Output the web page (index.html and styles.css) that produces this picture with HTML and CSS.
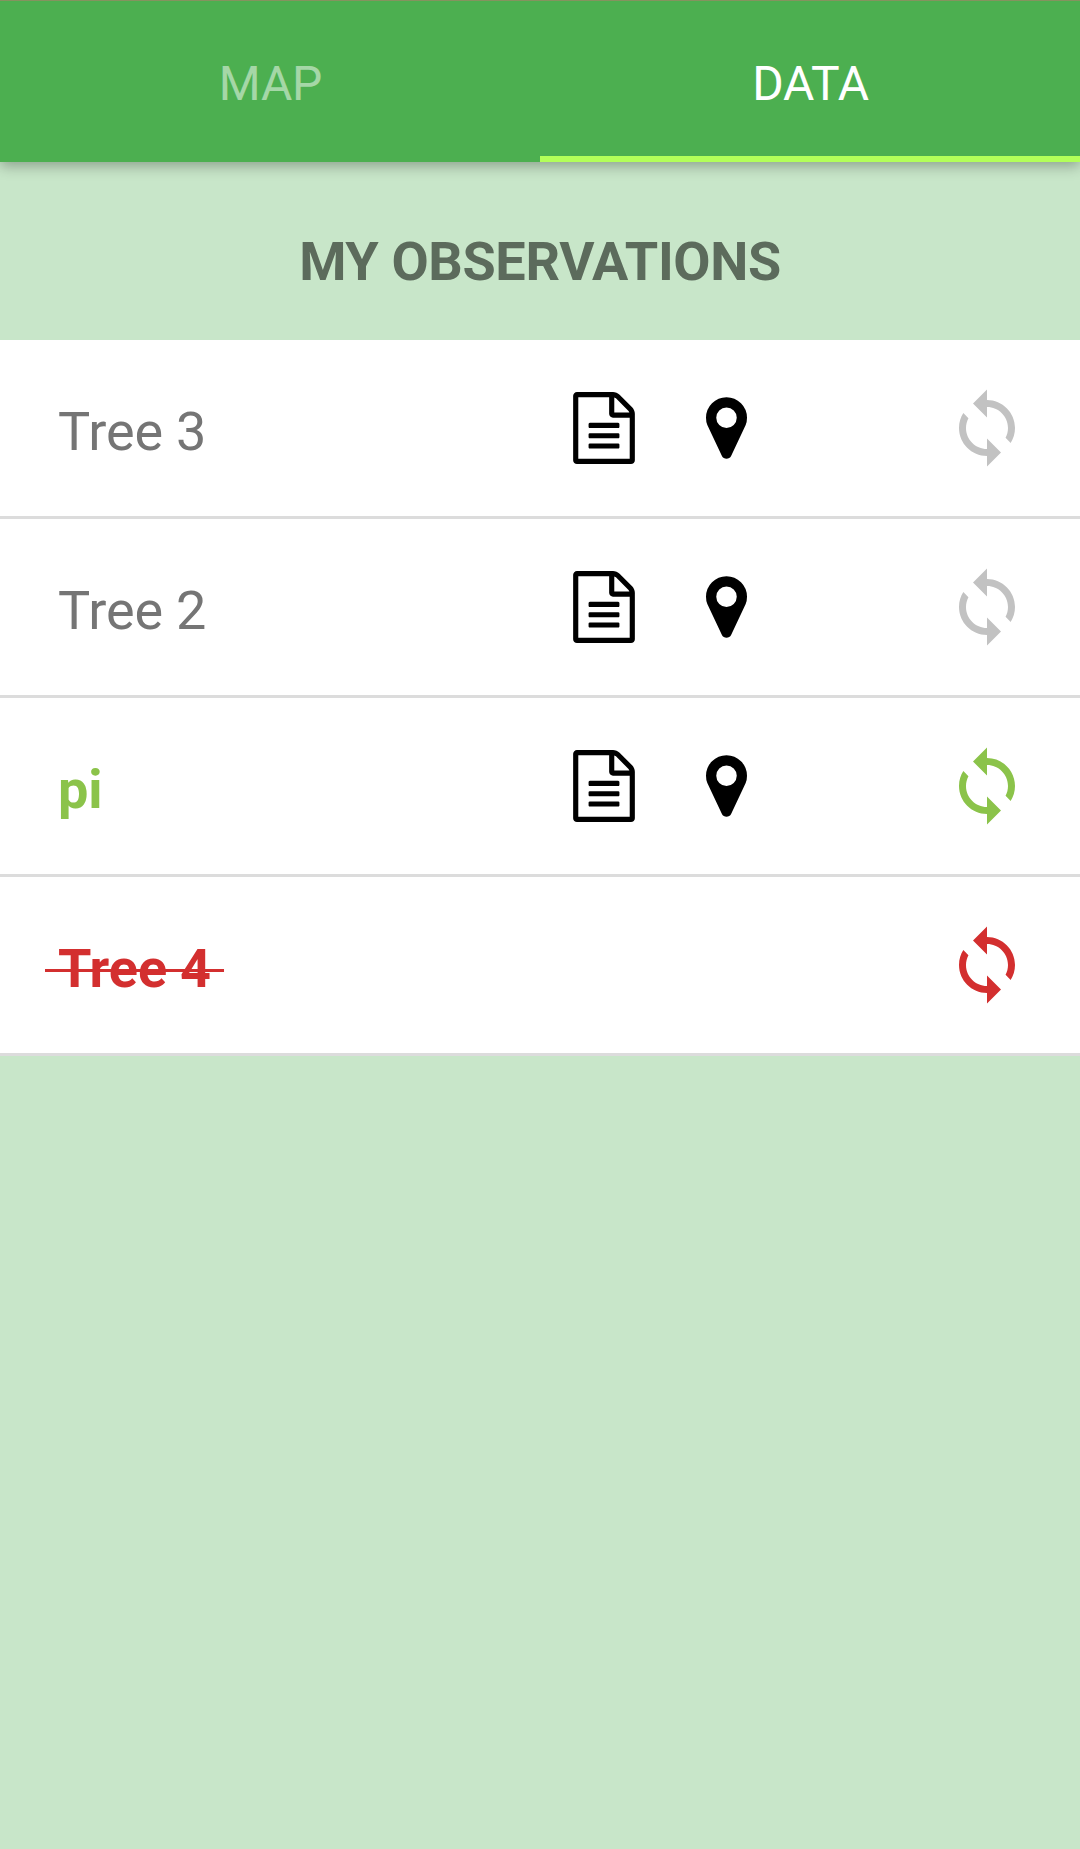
FILE: index.html
```html
<!DOCTYPE html>
<html lang="en">
<head>
<meta charset="utf-8">
<title>My Observations</title>
<link rel="stylesheet" href="styles.css">
</head>
<body>
<svg class="defs" aria-hidden="true">
  <symbol id="doc" viewBox="0 0 1536 1792"><path d="M1468 380q28 28 48 76t20 88v1152q0 40-28 68t-68 28H96q-40 0-68-28t-28-68V96q0-40 28-68T96 0h896q40 0 88 20t76 48zm-444-244v376h376q-10-29-22-41l-313-313q-12-12-41-22zm384 1528V640H992q-40 0-68-28t-28-68V128H128v1536h1280zM384 800q0-14 9-23t23-9h704q14 0 23 9t9 23v64q0 14-9 23t-23 9H416q-14 0-23-9t-9-23v-64zm736 224q14 0 23 9t9 23v64q0 14-9 23t-23 9H416q-14 0-23-9t-9-23v-64q0-14 9-23t23-9h704zm0 256q14 0 23 9t9 23v64q0 14-9 23t-23 9H416q-14 0-23-9t-9-23v-64q0-14 9-23t23-9h704z"/></symbol>
  <symbol id="pin" viewBox="0 0 1024 1536"><path d="M768 512q0-106-75-181t-181-75-181 75-75 181 75 181 181 75 181-75 75-181zm256 0q0 109-33 179l-364 774q-16 33-47.500 52t-67.500 19-67.500-19-46.500-52L33 691Q0 621 0 512 0 300 150 150T512 0t362 150 150 362z"/></symbol>
  <symbol id="sync" viewBox="0 0 24 24"><path d="M12 4V1L8 5l4 4V6c3.310 0 6 2.690 6 6 0 1.010-.25 1.970-.7 2.800l1.460 1.460C19.540 15.030 20 13.570 20 12c0-4.420-3.580-8-8-8zm0 14c-3.310 0-6-2.690-6-6 0-1.010.25-1.970.7-2.800L5.240 7.740C4.460 8.970 4 10.430 4 12c0 4.420 3.580 8 8 8v3l4-4-4-4v3z"/></symbol>
</svg>
<nav class="tabs">
  <a class="tab">MAP</a>
  <a class="tab tab-active">DATA</a>
</nav>
<main>
  <h1 class="title">MY OBSERVATIONS</h1>
  <ul class="list">
    <li class="row">
      <span class="name">&nbsp;Tree 3&nbsp;</span>
      <svg class="doc"><use href="#doc"/></svg>
      <svg class="pin"><use href="#pin"/></svg>
      <svg class="sync"><use href="#sync"/></svg>
    </li>
    <li class="row">
      <span class="name">&nbsp;Tree 2&nbsp;</span>
      <svg class="doc"><use href="#doc"/></svg>
      <svg class="pin"><use href="#pin"/></svg>
      <svg class="sync"><use href="#sync"/></svg>
    </li>
    <li class="row synced">
      <span class="name">&nbsp;pi&nbsp;</span>
      <svg class="doc"><use href="#doc"/></svg>
      <svg class="pin"><use href="#pin"/></svg>
      <svg class="sync"><use href="#sync"/></svg>
    </li>
    <li class="row deleted">
      <span class="name">&nbsp;Tree 4&nbsp;</span>
      <svg class="sync"><use href="#sync"/></svg>
    </li>
  </ul>
</main>
</body>
</html>
```
FILE: styles.css
```css
* {
  box-sizing: border-box;
}

body {
  margin: 0;
  min-height: 1849px;
  background: #c8e6c9;
  font-family: Roboto, sans-serif;
}

.defs {
  display: none;
}

.tabs {
  display: flex;
  height: 162px;
  background: #4caf50;
  border-top: 1px solid #85925f;
  box-shadow: 0 4px 13px rgba(0, 0, 0, 0.3);
}

.tab {
  flex: 1;
  padding: 5px 0 0 1px;
  border-bottom: 6px solid transparent;
  color: rgba(255, 255, 255, 0.5);
  font-size: 48px;
  letter-spacing: -0.2px;
  line-height: 156px;
  text-align: center;
}

.tab-active {
  border-color: #b2ff59;
  color: #fff;
}

.title {
  height: 178px;
  margin: 0;
  padding-top: 68px;
  color: #5c6b5c;
  font-size: 54px;
  font-weight: 700;
  letter-spacing: -0.35px;
  line-height: 64px;
  text-align: center;
}

.list {
  margin: 0;
  padding: 0;
  list-style: none;
}

.row {
  display: flex;
  align-items: center;
  height: 179px;
  padding: 0 51px 0 45px;
  background: #fff;
  border-bottom: 3px solid #dcdcdc;
  color: #757575;
  font-size: 54px;
}

.name {
  width: 528px;
  padding-top: 7px;
  line-height: 64px;
  word-spacing: -0.5px;
}

.doc {
  width: 62px;
  height: 72px;
  fill: #000;
}

.pin {
  width: 41px;
  height: 62px;
  margin-left: 71px;
  fill: #000;
}

.sync {
  width: 84px;
  height: 84px;
  margin-left: auto;
  fill: #c2c2c2;
}

.synced,
.deleted {
  font-weight: 700;
}

.synced {
  color: #8bc34a;
}

.deleted {
  color: #d32f2f;
}

.deleted .name {
  text-decoration: line-through;
  text-decoration-thickness: 3px;
}

.synced .sync,
.deleted .sync {
  fill: currentColor;
}
```
